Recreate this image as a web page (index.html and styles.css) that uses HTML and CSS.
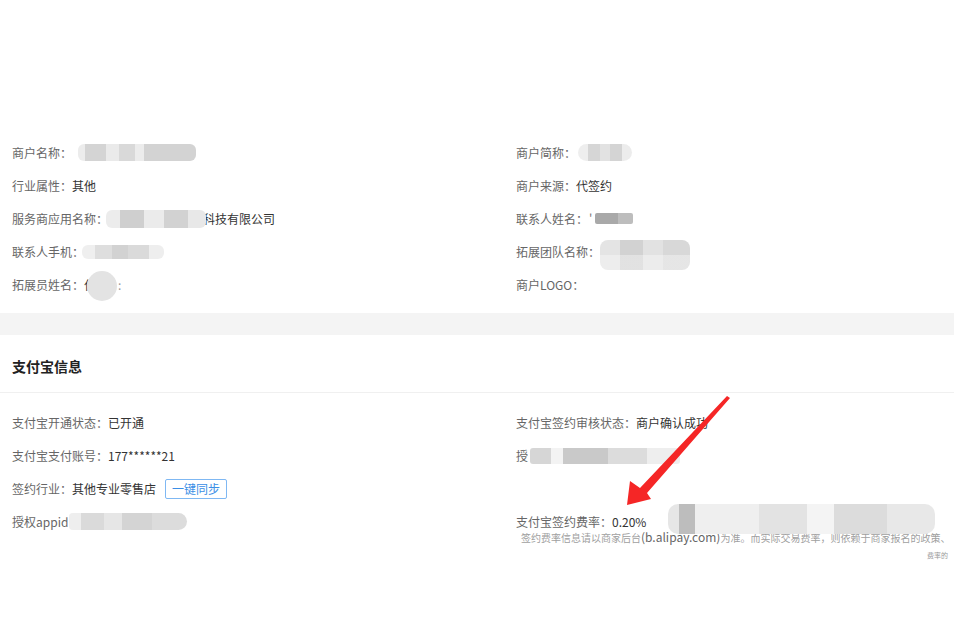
FILE: index.html
```html
<!DOCTYPE html>
<html lang="zh-CN">
<head>
<meta charset="utf-8">
<title>商户信息</title>
<link rel="stylesheet" href="styles.css">
</head>
<body>
<div class="page">
  <section class="card basic">
    <div class="grid">
      <div class="item"><span class="label">商户名称：</span><span class="blur b-name"></span></div>
      <div class="item"><span class="label">商户简称：</span><span class="blur b-short"></span></div>
      <div class="item"><span class="label">行业属性：</span><span class="value">其他</span></div>
      <div class="item"><span class="label">商户来源：</span><span class="value">代签约</span></div>
      <div class="item"><span class="label">服务商应用名称：</span><span class="blur b-app"></span><span class="value">科技有限公司</span></div>
      <div class="item"><span class="label">联系人姓名：</span><span class="value tick">'</span><span class="blur b-contact"></span></div>
      <div class="item"><span class="label">联系人手机：</span><span class="blur b-phone"></span></div>
      <div class="item"><span class="label">拓展团队名称：</span><span class="blur b-team"></span></div>
      <div class="item"><span class="label">拓展员姓名：</span><span class="value">付</span><span class="blur b-staff"></span><span class="value colon">:</span></div>
      <div class="item"><span class="label">商户LOGO：</span></div>
    </div>
  </section>

  <div class="band"></div>

  <section class="card alipay">
    <h2 class="card-title">支付宝信息</h2>
    <div class="grid">
      <div class="item"><span class="label">支付宝开通状态：</span><span class="value">已开通</span></div>
      <div class="item"><span class="label">支付宝签约审核状态：</span><span class="value">商户确认成功</span></div>
      <div class="item"><span class="label">支付宝支付账号：</span><span class="value">177******21</span></div>
      <div class="item"><span class="label">授</span><span class="blur b-auth"></span></div>
      <div class="item"><span class="label">签约行业：</span><span class="value">其他专业零售店</span><button class="btn-sync">一键同步</button></div>
      <div class="item"></div>
      <div class="item"><span class="label">授权appid</span><span class="blur b-appid"></span></div>
      <div class="item fee">
        <div class="fee-line"><span class="label">支付宝签约费率：</span><span class="value">0.20%</span><span class="blur b-fee"></span></div>
        <p class="note">签约费率信息请以商家后台<span class="note-link">(b.alipay.com)</span>为准。而实际交易费率，则依赖于商家报名的政策、</p>
        <p class="note note-end">费率的</p>
      </div>
    </div>
  </section>

  <svg class="arrow" width="957" height="631" viewBox="0 0 957 631" aria-hidden="true">
    <polygon points="727,396 730,398 647,493 651,499 627,505 630,481 640,488" fill="#f52626"/>
  </svg>
</div>
</body>
</html>
```

FILE: styles.css
```css
html, body {
  margin: 0;
  padding: 0;
  background: #ffffff;
}

body {
  font-family: "Noto Sans CJK SC", "Noto Sans", "Liberation Sans", sans-serif;
  font-size: 12px;
  color: #333333;
}

.page {
  position: relative;
  width: 954px;
  height: 631px;
  overflow: hidden;
}

.card {
  background: #ffffff;
}

.basic {
  padding: 136px 0 12px;
}

.band {
  height: 22px;
  background: #f4f4f4;
}

.card-title {
  margin: 0;
  padding: 21px 12px 16px;
  font-size: 14px;
  line-height: 20px;
  font-weight: 700;
  color: #222222;
  border-bottom: 1px solid #f0f0f0;
}

.alipay .grid {
  padding-top: 13px;
}

.grid {
  display: grid;
  grid-template-columns: 504px 1fr;
  padding-left: 12px;
}

.item {
  height: 33px;
  line-height: 33px;
  white-space: nowrap;
  display: flex;
  align-items: center;
}

.label {
  color: #666666;
}

.value {
  color: #333333;
}

.tick {
  margin-left: 1px;
  margin-right: 3px;
  color: #777777;
}

.colon {
  color: #999999;
  margin-left: 1px;
}

.btn-sync {
  margin-left: 9px;
  height: 20px;
  padding: 0 6px;
  border: 1px solid #7fb8f3;
  border-radius: 2px;
  background: #ffffff;
  color: #3a8ee6;
  font-family: inherit;
  font-size: 12px;
  line-height: 18px;
}

/* redacted (blurred) values */
.blur {
  display: inline-block;
  border-radius: 6px;
  filter: blur(0.6px);
}

.b-name {
  width: 118px;
  height: 17px;
  margin-left: 6px;
  background: linear-gradient(90deg, #ececec 0 6%, #d4d4d4 6% 24%, #eaeaea 24% 35%, #d9d9d9 35% 48%, #ececec 48% 56%, #d3d3d3 56% 100%);
}

.b-short {
  width: 54px;
  height: 17px;
  margin-left: 2px;
  border-radius: 9px;
  background: linear-gradient(90deg, #eeeeee 0 18%, #d6d6d6 18% 40%, #e2e2e2 40% 60%, #d4d4d4 60% 82%, #ececec 82% 100%);
}

.b-app {
  width: 100px;
  height: 18px;
  margin-left: -2px;
  margin-right: -3px;
  position: relative;
  z-index: 1;
  background: linear-gradient(90deg, #ececec 0 14%, #cfcfcf 14% 38%, #ebebeb 38% 58%, #d2d2d2 58% 82%, #e8e8e8 82% 100%);
}

.b-contact {
  width: 38px;
  height: 11px;
  border-radius: 2px;
  background: linear-gradient(90deg, #a9a9a9 0 60%, #bdbdbd 60% 100%);
}

.b-phone {
  width: 82px;
  height: 14px;
  margin-left: -2px;
  background: linear-gradient(90deg, #efefef 0 16%, #dedede 16% 36%, #d2d2d2 36% 56%, #dadada 56% 82%, #eeeeee 82% 100%);
}

.b-team {
  width: 90px;
  height: 30px;
  margin-top: 7px;
  border-radius: 8px;
  background:
    linear-gradient(180deg, transparent 0 50%, rgba(255,255,255,0.35) 50% 100%),
    linear-gradient(90deg, #e4e4e4 0 22%, #d2d2d2 22% 48%, #e2e2e2 48% 70%, #d8d8d8 70% 100%);
}

.b-staff {
  width: 30px;
  height: 30px;
  margin-left: -9px;
  margin-top: 3px;
  border-radius: 50%;
  background: #e3e3e3;
}

.b-auth {
  width: 150px;
  height: 16px;
  margin-left: 2px;
  border-radius: 3px;
  background: linear-gradient(90deg, #d6d6d6 0 14%, #f3f3f3 14% 22%, #c9c9c9 22% 52%, #dcdcdc 52% 78%, #eeeeee 78% 100%);
}

.b-appid {
  width: 118px;
  height: 17px;
  margin-left: 1px;
  border-radius: 4px 9px 9px 4px;
  background: linear-gradient(90deg, #eeeeee 0 10%, #dadada 10% 30%, #e6e6e6 30% 45%, #d4d4d4 45% 70%, #dcdcdc 70% 100%);
}

.fee {
  display: block;
  height: auto;
}

.fee-line {
  display: flex;
  align-items: center;
  height: 33px;
}

.b-fee {
  width: 267px;
  height: 30px;
  margin-left: 22px;
  margin-top: -6px;
  border-radius: 10px;
  background: linear-gradient(90deg, #e6e6e6 0 4%, #bdbdbd 4% 10%, #efefef 10% 34%, #e3e3e3 34% 52%, #f4f4f4 52% 62%, #dcdcdc 62% 82%, #e8e8e8 82% 100%);
}

.note {
  margin: -8px 0 0 5px;
  font-size: 10px;
  line-height: 14px;
  color: #a0a0a0;
  white-space: nowrap;
}

.note-link {
  font-size: 12px;
  color: #666666;
}

.note-end {
  margin: 5px 0 0 0;
  padding-right: 6px;
  font-size: 7px;
  line-height: 10px;
  text-align: right;
  color: #999999;
}

.arrow {
  position: absolute;
  left: 0;
  top: 0;
  pointer-events: none;
}
```
